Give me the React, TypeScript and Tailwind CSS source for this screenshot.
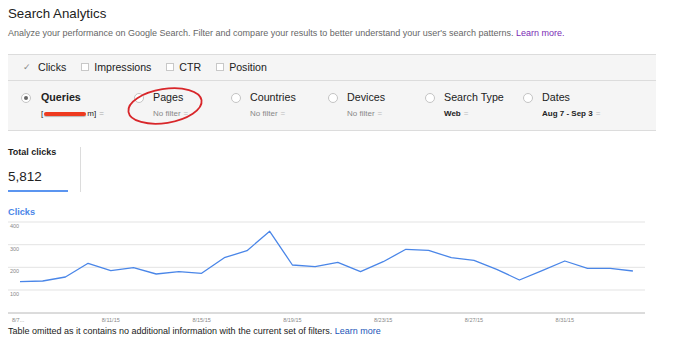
import React from 'react'

const points = [
  281.7, 281, 277, 263.3, 270.7, 267.7, 274, 271.7, 273.3, 257.7, 250.7, 231.3, 265, 266.7, 262.3, 271.7,
  261.7, 249.3, 250.3, 257.7, 260.3, 269.3, 280, 270.7, 261, 268.3, 268.3, 271,
]

const metrics = [
  { label: 'Clicks', checked: true },
  { label: 'Impressions', checked: false },
  { label: 'CTR', checked: false },
  { label: 'Position', checked: false },
]

const filters = [
  { label: 'Pages', value: 'No filter', bold: false, width: 'w-[97px]' },
  { label: 'Countries', value: 'No filter', bold: false, width: 'w-[97px]' },
  { label: 'Devices', value: 'No filter', bold: false, width: 'w-[97px]' },
  { label: 'Search Type', value: 'Web', bold: true, width: 'w-[98px]' },
  { label: 'Dates', value: 'Aug 7 - Sep 3', bold: true, width: 'w-[110px]' },
]

function Radio({ selected }: { selected?: boolean }) {
  return (
    <span className="mt-[2px] flex h-[10px] w-[10px] shrink-0 items-center justify-center rounded-full border border-[#c4c4c4] bg-white">
      {selected && <span className="h-[4px] w-[4px] rounded-full bg-[#666]" />}
    </span>
  )
}

function MetricToggles() {
  return (
    <div className="flex h-[26px] items-center border-b border-[#dcdcdc] pl-[15px]">
      {metrics.map((m) => (
        <div key={m.label} className="mr-[15px] flex items-center">
          {m.checked ? (
            <span className="w-[8px] text-[9px] leading-[10px] text-[#888]">✓</span>
          ) : (
            <span className="h-[8px] w-[8px] border border-[#c8c8c8] bg-white" />
          )}
          <span className={`text-[10.6px] text-[#222] ${m.checked ? 'ml-[7px]' : 'ml-[5px]'}`}>{m.label}</span>
        </div>
      ))}
    </div>
  )
}

function FilterRow() {
  return (
    <div className="relative flex h-[50px] items-start border-b border-[#dcdcdc] pt-[10px]">
      <div className="ml-[13px] flex w-[113px] items-start">
        <Radio selected />
        <div className="ml-[10px]">
          <div className="text-[10.7px] font-bold leading-[13px] text-[#222]">Queries</div>
          <div className="mt-[5px] flex items-center text-[8px] leading-[10px] text-[#222]">
            [
            <span className="mx-[1px] inline-block h-[4px] w-[42px] rounded-full bg-[#ee3a1f] shadow-[0_1px_1px_rgba(0,0,0,0.25)]" />
            m]<span className="ml-[3px] text-[#aaa]">=</span>
          </div>
        </div>
      </div>
      {filters.map((f) => (
        <div key={f.label} className={`flex items-start ${f.width}`}>
          <Radio />
          <div className="ml-[9px]">
            <div className="text-[10.7px] leading-[13px] text-[#222]">{f.label}</div>
            <div
              className={`mt-[5px] text-[8px] leading-[10px] ${f.bold ? 'font-bold text-[#222]' : 'text-[#888]'}`}
            >
              {f.value}
              <span className="ml-[3px] font-normal text-[#bbb]">=</span>
            </div>
          </div>
        </div>
      ))}
      {/* red annotation round "Pages" */}
      <svg className="pointer-events-none absolute left-[110px] top-[2px]" width="96" height="48" viewBox="0 0 96 48">
        <ellipse
          cx="47"
          cy="23"
          rx="37"
          ry="17"
          transform="rotate(-9 47 23)"
          fill="none"
          stroke="#d8262a"
          strokeWidth="1.8"
        />
      </svg>
    </div>
  )
}

function ClicksChart() {
  const xs = points.map((_, i) => 20 + i * 22.7)
  const line = points.map((y, i) => `${xs[i].toFixed(1)},${y}`).join(' ')
  const grid = [
    { y: 222, label: '400' },
    { y: 244.7, label: '300' },
    { y: 267.3, label: '200' },
    { y: 290, label: '100' },
  ]
  const ticks = [
    { i: 4, label: '8/11/15' },
    { i: 8, label: '8/15/15' },
    { i: 12, label: '8/19/15' },
    { i: 16, label: '8/23/15' },
    { i: 20, label: '8/27/15' },
    { i: 24, label: '8/31/15' },
  ]
  return (
    <svg width="673" height="108" viewBox="0 218 673 108" className="block">
      {grid.map((g) => (
        <g key={g.label}>
          <line x1="8" x2="645" y1={g.y} y2={g.y} stroke="#e3e3e3" strokeWidth="1" />
          <text x="10" y={g.y + 6} fontSize="5.5" fill="#888" fontFamily="Liberation Sans, Arial, sans-serif">
            {g.label}
          </text>
        </g>
      ))}
      <line x1="8" x2="645" y1="313" y2="313" stroke="#b8b8b8" strokeWidth="1" />
      <text x="12" y="322" fontSize="5.5" fill="#888" fontFamily="Liberation Sans, Arial, sans-serif">
        8/7...
      </text>
      {ticks.map((t) => (
        <text
          key={t.label}
          x={xs[t.i]}
          y="322"
          fontSize="5.5"
          fill="#888"
          textAnchor="middle"
          fontFamily="Liberation Sans, Arial, sans-serif"
        >
          {t.label}
        </text>
      ))}
      <polyline points={line} fill="none" stroke="#4a86e8" strokeWidth="1.3" strokeLinejoin="round" />
    </svg>
  )
}

export default function App() {
  return (
    <div className="h-[359px] w-[673px] overflow-hidden bg-white font-['Liberation_Sans',Arial,sans-serif]">
      <div className="px-[8px] pt-[6px]">
        <h1 className="text-[13.3px] leading-[16px] text-[#222]">Search Analytics</h1>
        <p className="mt-[6px] text-[9px] leading-[10px] text-[#666]">
          Analyze your performance on Google Search. Filter and compare your results to better understand your
          user's search patterns. <span className="text-[#7b2bb5]">Learn more.</span>
        </p>
      </div>

      <div className="ml-[8px] mt-[16px] w-[648px] border-t border-[#dcdcdc] bg-[#f5f5f5]">
        <MetricToggles />
        <FilterRow />
      </div>

      <div className="ml-[8px] mt-[16px] flex h-[45px]">
        <div className="flex w-[73px] border-r border-[#dcdcdc]">
          <div className="flex w-[60px] flex-col border-b-2 border-[#5b95f0]">
            <div className="text-[9px] font-bold leading-[11px] text-[#222]">Total clicks</div>
            <div className="mt-[11px] text-[13.5px] leading-[16px] text-[#222]">5,812</div>
          </div>
        </div>
      </div>

      <div className="ml-[8px] mt-[15px] text-[9.2px] font-bold leading-[11px] text-[#4a86e8]">Clicks</div>
      <ClicksChart />
      <p className="ml-[8px] text-[9px] leading-[11px] text-[#222]">
        Table omitted as it contains no additional information with the current set of filters.{' '}
        <span className="text-[#1a55b8]">Learn more</span>
      </p>
    </div>
  )
}
